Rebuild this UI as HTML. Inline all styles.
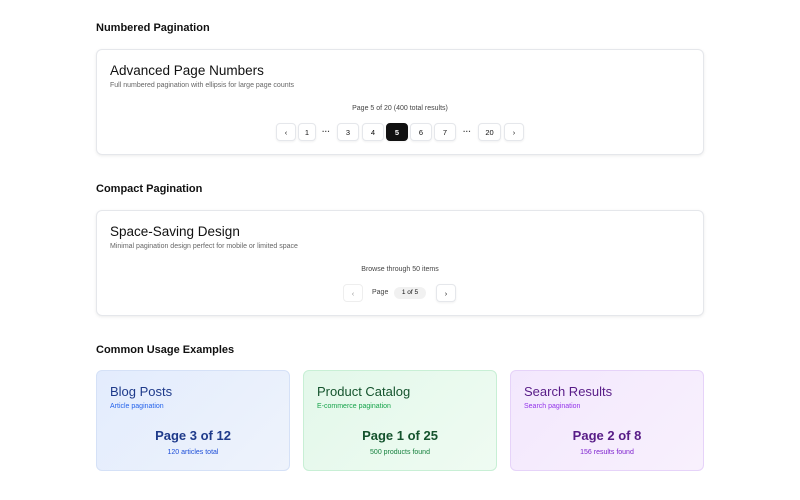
<!DOCTYPE html>
<html><head><style>
*{box-sizing:border-box;margin:0;padding:0}
body{width:800px;height:500px;background:#fff;font-family:"Liberation Sans",sans-serif;color:#111;position:relative;overflow:hidden}
.h{position:absolute;left:96px;font-size:11px;font-weight:bold;color:#111}
.card{position:absolute;left:96px;width:608px;border:1px solid #e5e7eb;border-radius:6px;box-shadow:0 1px 3px rgba(0,0,0,.08);background:#fff}
.t{position:absolute;left:13px;font-size:13.5px;color:#111}
.s{position:absolute;left:13px;font-size:7px;color:#666}
.c{position:absolute;left:0;width:100%;text-align:center;font-size:7px;color:#444}
.b{position:absolute;height:18px;border:1px solid #e5e7eb;border-radius:4px;background:#fff;font-size:7.5px;display:flex;align-items:center;justify-content:center;box-shadow:0 1px 2px rgba(0,0,0,.06);color:#111}
.d{position:absolute;font-size:8px;color:#444;font-weight:bold}
.sc{position:absolute;top:370px;width:194px;height:101px;border-radius:6px}
.sc .a{position:absolute;left:13px;top:13px;font-size:13px}
.sc .bb{position:absolute;left:13px;top:32px;font-size:7px}
.sc .p{position:absolute;left:0;width:100%;text-align:center;top:57px;font-size:13px;font-weight:bold}
.sc .q{position:absolute;left:0;width:100%;text-align:center;top:78px;font-size:7px}
</style></head><body>
<div class="h" style="top:22px">Numbered Pagination</div>
<div class="card" style="top:49px;height:106px">
<div class="t" style="top:13px">Advanced Page Numbers</div>
<div class="s" style="top:32px">Full numbered pagination with ellipsis for large page counts</div>
<div class="c" style="top:55px">Page 5 of 20 (400 total results)</div>
</div>
<div class="b" style="left:276px;top:123px;width:20px">&#8249;</div>
<div class="b" style="left:298px;top:123px;width:18px">1</div>
<div class="d" style="left:322px;top:127px">···</div>
<div class="b" style="left:337px;top:123px;width:22px">3</div>
<div class="b" style="left:362px;top:123px;width:22px">4</div>
<div class="b" style="left:386px;top:123px;width:22px;background:#111;color:#fff;border-color:#111;font-weight:bold">5</div>
<div class="b" style="left:410px;top:123px;width:22px">6</div>
<div class="b" style="left:434px;top:123px;width:22px">7</div>
<div class="d" style="left:463px;top:127px">···</div>
<div class="b" style="left:478px;top:123px;width:23px">20</div>
<div class="b" style="left:504px;top:123px;width:20px">&#8250;</div>

<div class="h" style="top:183px">Compact Pagination</div>
<div class="card" style="top:210px;height:106px">
<div class="t" style="top:13px">Space-Saving Design</div>
<div class="s" style="top:32px">Minimal pagination design perfect for mobile or limited space</div>
<div class="c" style="top:55px">Browse through 50 items</div>
</div>
<div class="b" style="left:343px;top:284px;width:20px;color:#999;box-shadow:none;border-color:#eee">&#8249;</div>
<div class="d" style="left:372px;top:289px;font-weight:normal;font-size:7px">Page</div>
<div style="position:absolute;left:394px;top:287px;width:32px;height:12px;border-radius:6px;background:#f1f1f1;font-size:6.5px;text-align:center;line-height:12px">1 of 5</div>
<div class="b" style="left:436px;top:284px;width:20px">&#8250;</div>

<div class="h" style="top:344px">Common Usage Examples</div>
<div class="sc" style="left:96px;background:linear-gradient(135deg,#e3ecfd,#eef3fc);border:1px solid #d5e1f7;color:#1e3a8a">
<div class="a">Blog Posts</div><div class="bb" style="color:#2563eb">Article pagination</div>
<div class="p">Page 3 of 12</div><div class="q" style="color:#1d4ed8">120 articles total</div></div>
<div class="sc" style="left:303px;background:linear-gradient(135deg,#e3f8ea,#effbf2);border:1px solid #c8efd5;color:#14532d">
<div class="a">Product Catalog</div><div class="bb" style="color:#16a34a">E-commerce pagination</div>
<div class="p">Page 1 of 25</div><div class="q" style="color:#15803d">500 products found</div></div>
<div class="sc" style="left:510px;background:linear-gradient(135deg,#f3e8fd,#f8f0fd);border:1px solid #e6d3f9;color:#581c87">
<div class="a">Search Results</div><div class="bb" style="color:#9333ea">Search pagination</div>
<div class="p">Page 2 of 8</div><div class="q" style="color:#7e22ce">156 results found</div></div>
</body></html>
